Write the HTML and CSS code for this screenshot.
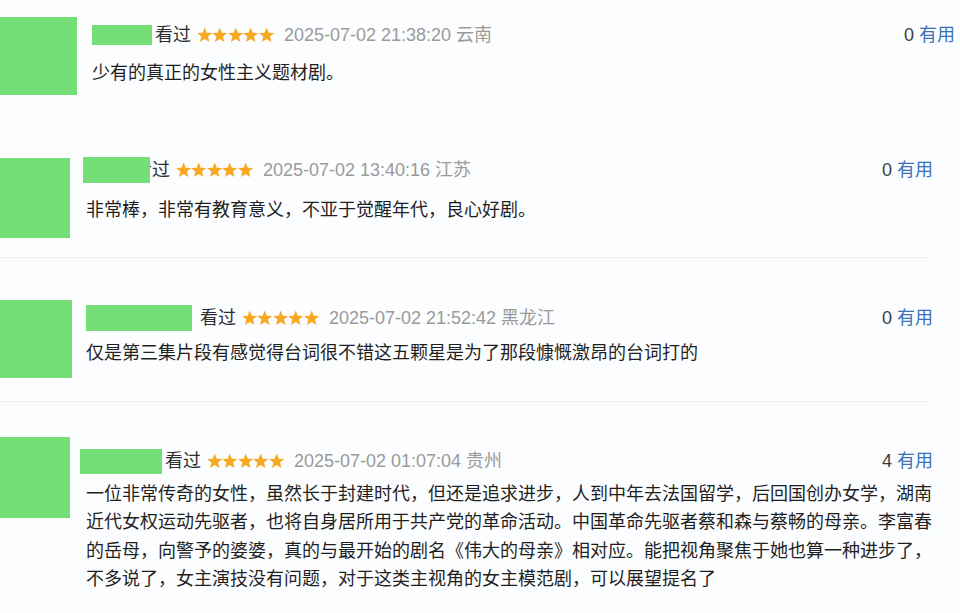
FILE: index.html
```html
<!DOCTYPE html>
<html lang="zh-CN">
<head>
<meta charset="utf-8">
<title>短评</title>
<link rel="stylesheet" href="styles.css">
</head>
<body>
<svg class="defs" width="0" height="0" aria-hidden="true">
  <defs>
    <symbol id="star" viewBox="0 0 15 15">
      <polygon points="7.5,0.2 9.5,5.3 14.9,5.5 10.7,8.9 12.2,14.4 7.5,11.3 2.8,14.4 4.3,8.9 0.1,5.5 5.5,5.3"/>
    </symbol>
  </defs>
</svg>
<main class="list">
  <section class="review r1">
    <div class="avatar"></div>
    <div class="body">
      <div class="head">
        <span class="name"></span>
        <span class="watched">看过</span>
        <span class="stars"><svg><use href="#star"/></svg><svg><use href="#star"/></svg><svg><use href="#star"/></svg><svg><use href="#star"/></svg><svg><use href="#star"/></svg></span>
        <span class="time">2025-07-02 21:38:20</span>
        <span class="loc">云南</span>
        <span class="useful"><span class="count">0</span> <span class="vote">有用</span></span>
      </div>
      <p class="text">少有的真正的女性主义题材剧。</p>
    </div>
  </section>
  <section class="review r2">
    <div class="avatar"></div>
    <div class="body">
      <div class="head">
        <span class="name"></span>
        <span class="watched">看过</span>
        <span class="stars"><svg><use href="#star"/></svg><svg><use href="#star"/></svg><svg><use href="#star"/></svg><svg><use href="#star"/></svg><svg><use href="#star"/></svg></span>
        <span class="time">2025-07-02 13:40:16</span>
        <span class="loc">江苏</span>
        <span class="useful"><span class="count">0</span> <span class="vote">有用</span></span>
      </div>
      <p class="text">非常棒，非常有教育意义，不亚于觉醒年代，良心好剧。</p>
    </div>
  </section>
  <div class="sep"></div>
  <section class="review r3">
    <div class="avatar"></div>
    <div class="body">
      <div class="head">
        <span class="name"></span>
        <span class="watched">看过</span>
        <span class="stars"><svg><use href="#star"/></svg><svg><use href="#star"/></svg><svg><use href="#star"/></svg><svg><use href="#star"/></svg><svg><use href="#star"/></svg></span>
        <span class="time">2025-07-02 21:52:42</span>
        <span class="loc">黑龙江</span>
        <span class="useful"><span class="count">0</span> <span class="vote">有用</span></span>
      </div>
      <p class="text">仅是第三集片段有感觉得台词很不错这五颗星是为了那段慷慨激昂的台词打的</p>
    </div>
  </section>
  <div class="sep"></div>
  <section class="review r4">
    <div class="avatar"></div>
    <div class="body">
      <div class="head">
        <span class="name"></span>
        <span class="watched">看过</span>
        <span class="stars"><svg><use href="#star"/></svg><svg><use href="#star"/></svg><svg><use href="#star"/></svg><svg><use href="#star"/></svg><svg><use href="#star"/></svg></span>
        <span class="time">2025-07-02 01:07:04</span>
        <span class="loc">贵州</span>
        <span class="useful"><span class="count">4</span> <span class="vote">有用</span></span>
      </div>
      <p class="text">一位非常传奇的女性，虽然长于封建时代，但还是追求进步，人到中年去法国留学，后回国创办女学，湖南近代女权运动先驱者，也将自身居所用于共产党的革命活动。中国革命先驱者蔡和森与蔡畅的母亲。李富春的岳母，向警予的婆婆，真的与最开始的剧名《伟大的母亲》相对应。能把视角聚焦于她也算一种进步了，不多说了，女主演技没有问题，对于这类主视角的女主模范剧，可以展望提名了</p>
    </div>
  </section>
</main>
</body>
</html>
```

FILE: styles.css
```css
html, body {
  margin: 0;
  padding: 0;
  background: #fcfdfe;
}

body {
  width: 960px;
  height: 613px;
  overflow: hidden;
  font-family: "Liberation Sans", "Noto Sans CJK SC", sans-serif;
  font-size: 18px;
  color: #222;
}

.defs {
  position: absolute;
  width: 0;
  height: 0;
}

.list {
  display: flex;
  flex-direction: column;
}

.review {
  display: flex;
  align-items: flex-start;
  box-sizing: border-box;
  padding-right: 27px;
}

.avatar {
  flex: none;
  background: #76de77;
}

.body {
  flex: 1;
  min-width: 0;
}

.head {
  display: flex;
  align-items: center;
  height: 26px;
  line-height: 26px;
  white-space: nowrap;
}

.name {
  flex: none;
  background: #76de77;
  z-index: 1;
}

.watched {
  color: #2e2e2e;
}

.stars {
  display: flex;
  margin-left: 6px;
  height: 16px;
}

.stars svg {
  width: 15.4px;
  height: 16px;
  fill: #f8a923;
}

.time {
  margin-left: 10px;
  color: #9a9a9a;
}

.loc {
  margin-left: 5px;
  color: #9a9a9a;
}

.useful {
  margin-left: auto;
  color: #3d3d3d;
}

.vote {
  color: #3a72b3;
}

.text {
  margin: 0;
  line-height: 28.4px;
  color: #1f1f1f;
}

.sep {
  height: 1px;
  margin-right: 30px;
  background: #eaedf1;
}

/* review 1 */
.r1 { height: 140px; padding-right: 5px; }
.r1 .avatar { width: 77px; height: 78px; margin-top: 17px; }
.r1 .body { margin-top: 22px; padding-left: 15px; }
.r1 .name { width: 60px; height: 20px; margin-right: 3px; }
.r1 .text { margin-top: 11px; }

/* review 2 */
.r2 { height: 117px; }
.r2 .avatar { width: 70px; height: 80px; margin-top: 18px; }
.r2 .body { margin-top: 17px; padding-left: 16px; }
.r2 .name { width: 67px; height: 26px; margin-left: -3px; margin-right: -16px; }
.r2 .text { margin-top: 13px; }

/* review 3 */
.r3 { height: 143px; }
.r3 .avatar { width: 72px; height: 78px; margin-top: 42px; }
.r3 .body { margin-top: 47px; padding-left: 14px; }
.r3 .name { width: 106px; height: 26px; margin-right: 8px; }
.r3 .text { margin-top: 8px; }

/* review 4 */
.r4 { height: 211px; }
.r4 .avatar { width: 70px; height: 81px; margin-top: 35px; }
.r4 .body { margin-top: 46px; padding-left: 16px; }
.r4 .name { width: 82px; height: 25px; margin-left: -6px; margin-right: 3px; }
.r4 .text { margin-top: 6px; }
```
